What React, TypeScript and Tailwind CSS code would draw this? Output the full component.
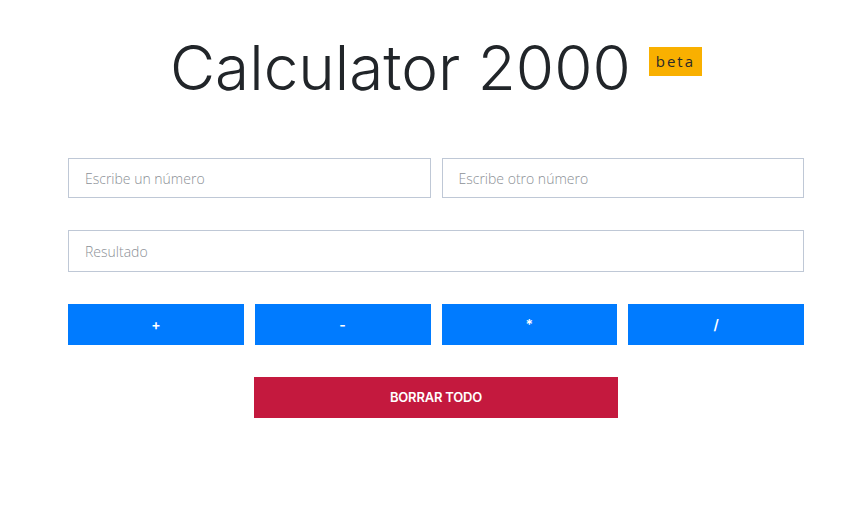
import { useState } from "react";

const ops = ["+", "-", "*", "/"];

export default function App() {
  const [a, setA] = useState("");
  const [b, setB] = useState("");
  const [result, setResult] = useState("");

  const calc = (op: string) => {
    const x = parseFloat(a);
    const y = parseFloat(b);
    if (isNaN(x) || isNaN(y)) return;
    const r = op === "+" ? x + y : op === "-" ? x - y : op === "*" ? x * y : x / y;
    setResult(String(r));
  };

  return (
    <div className="min-h-[520px] bg-white pl-[68px] pr-[64px] pt-[30px] font-['Open_Sans',sans-serif]">
      <div className="flex items-start justify-center gap-[18px]">
        <h1 className="font-['Inter',sans-serif] text-[62px] font-light leading-[76px] tracking-[0px] text-[#212529]">
          Calculator 2000
        </h1>
        <span className="mt-[17px] bg-[#f9b000] px-[7px] py-[3px] font-['Open_Sans',sans-serif] text-[15px] font-medium leading-[23px] tracking-[2px] text-[#2a2a2a]">
          beta
        </span>
      </div>

      <div className="mt-[52px] grid grid-cols-2 gap-[11px]">
        <input
          value={a}
          onChange={(e) => setA(e.target.value)}
          placeholder="Escribe un número"
          className="h-[40px] border border-[#bfc8d6] px-4 text-[14px] font-light text-[#495057] outline-none placeholder:text-[#8b9096]"
        />
        <input
          value={b}
          onChange={(e) => setB(e.target.value)}
          placeholder="Escribe otro número"
          className="h-[40px] border border-[#bfc8d6] px-4 text-[14px] font-light text-[#495057] outline-none placeholder:text-[#8b9096]"
        />
      </div>

      <input
        value={result}
        readOnly
        placeholder="Resultado"
        className="mt-[32px] block h-[42px] w-full border border-[#bfc8d6] px-4 text-[14px] font-light text-[#495057] outline-none placeholder:text-[#8b9096]"
      />

      <div className="mt-[32px] grid grid-cols-4 gap-[11px]">
        {ops.map((op) => (
          <button
            key={op}
            onClick={() => calc(op)}
            className="h-[41px] bg-[#007bff] font-['Inter',sans-serif] text-[14px] font-semibold text-white"
          >
            {op}
          </button>
        ))}
      </div>

      <div className="mt-[32px] flex justify-center">
        <button
          onClick={() => {
            setA("");
            setB("");
            setResult("");
          }}
          className="h-[41px] w-[364px] bg-[#c4193e] font-['Inter',sans-serif] text-[13px] font-semibold tracking-[-0.2px] text-white"
        >
          BORRAR TODO
        </button>
      </div>
    </div>
  );
}
